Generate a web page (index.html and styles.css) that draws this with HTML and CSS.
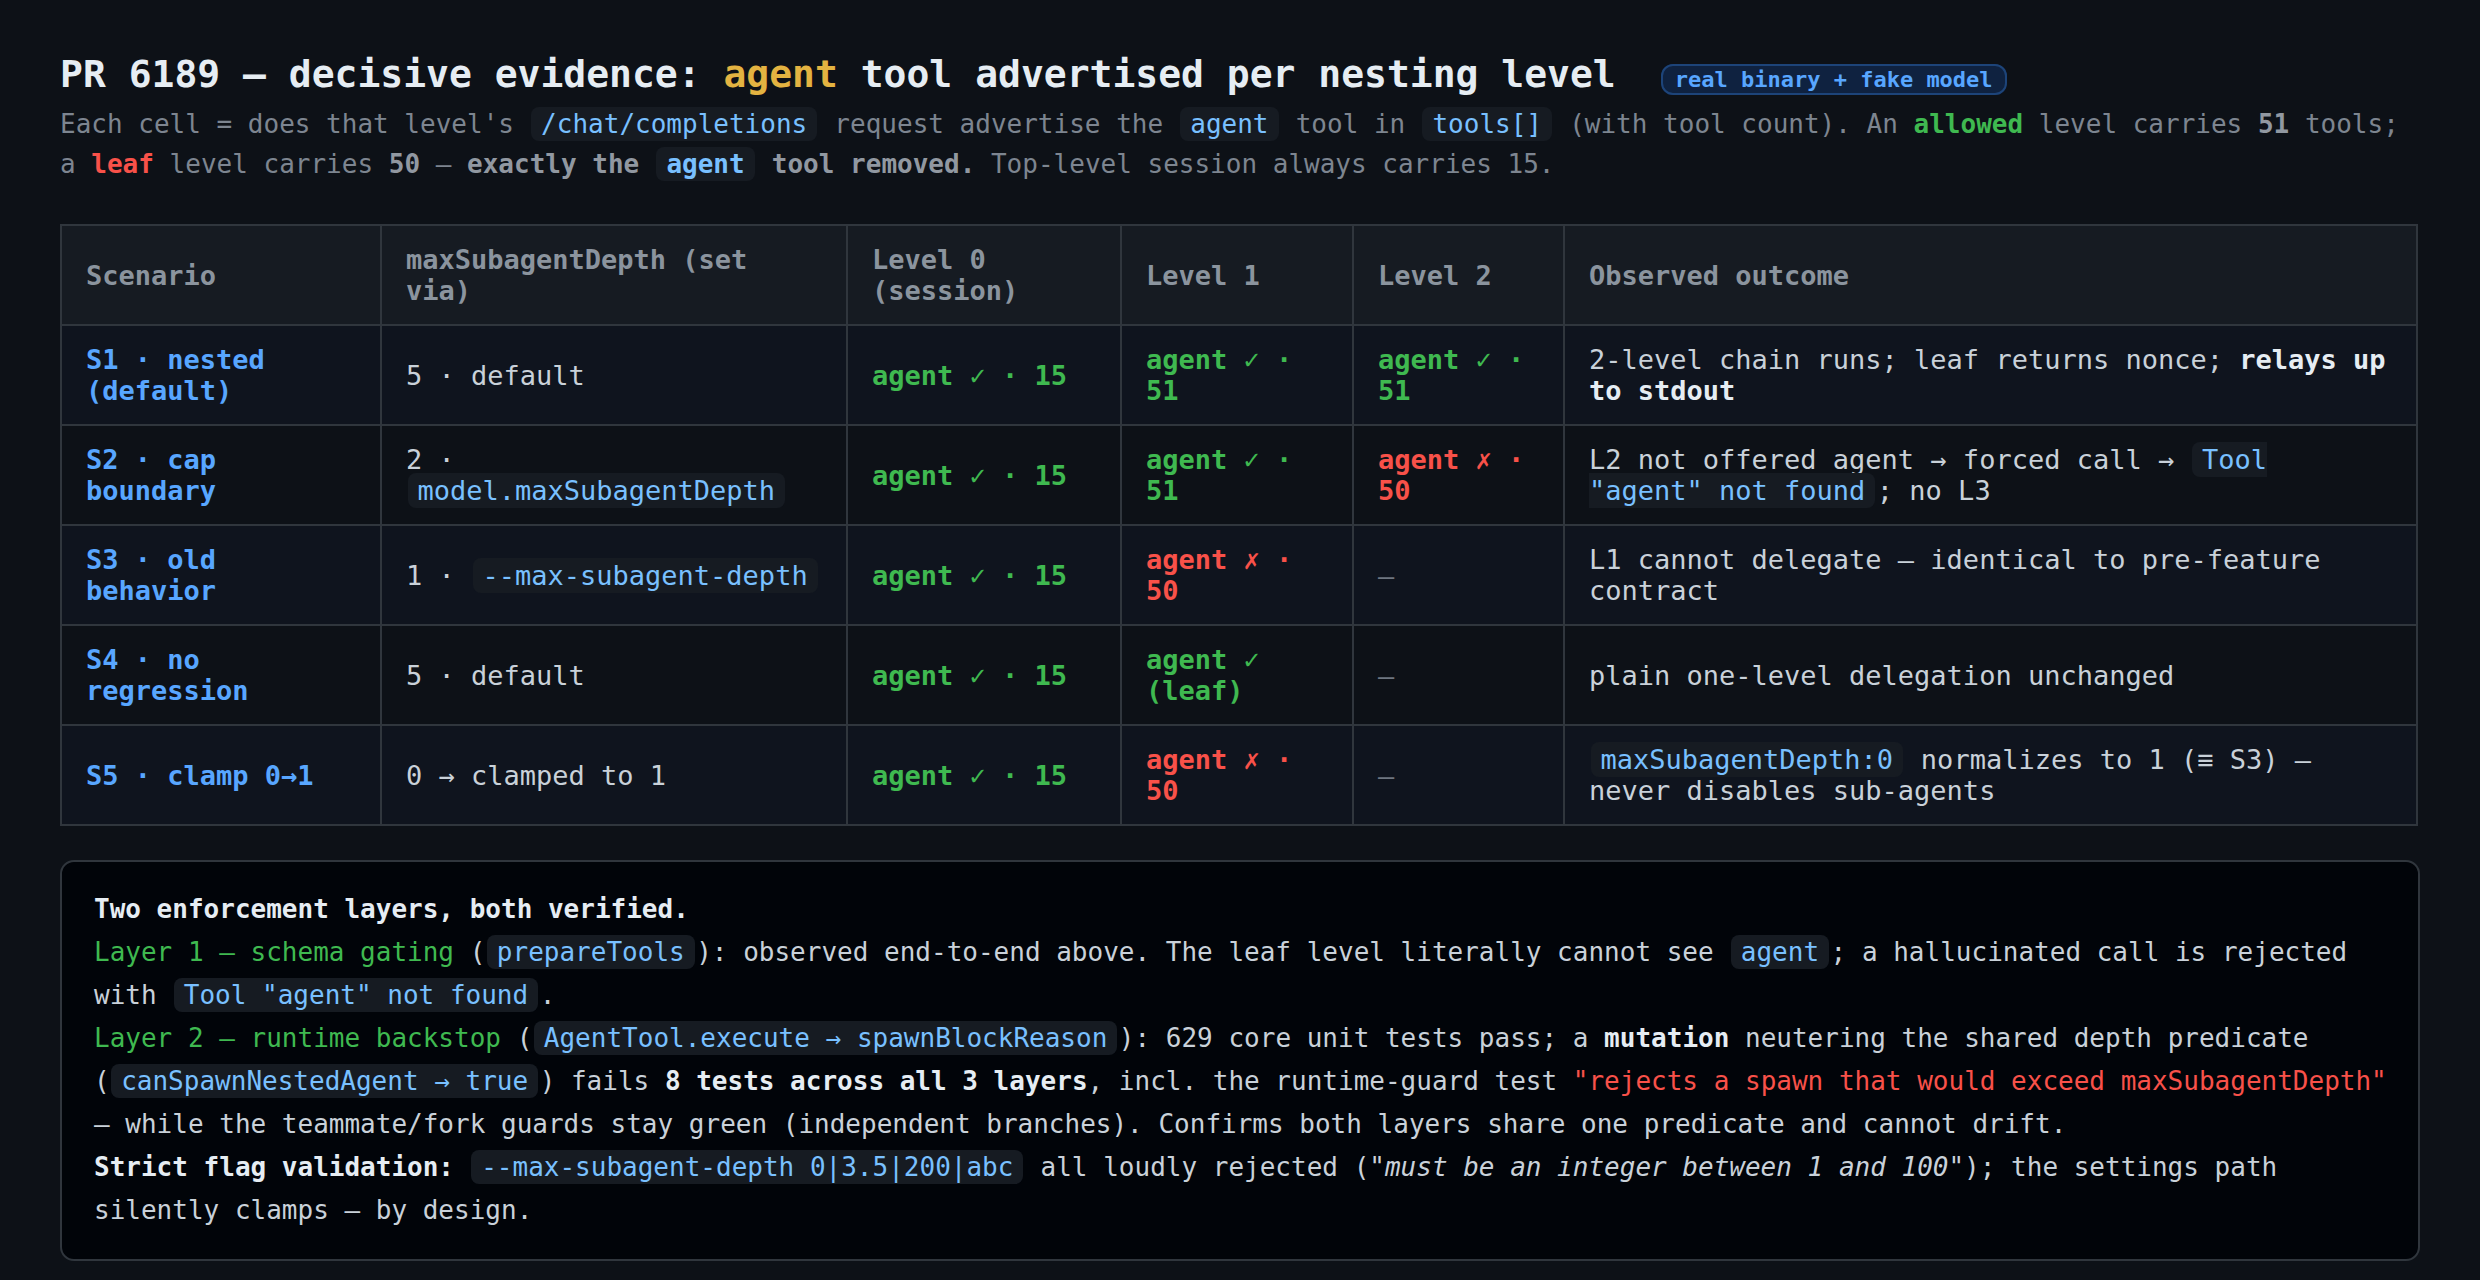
FILE: index.html
```html
<!DOCTYPE html>
<html lang="en">
<head>
<meta charset="utf-8">
<title>PR 6189 — decisive evidence</title>
<link rel="stylesheet" href="styles.css">
</head>
<body>
<main class="page">
  <h1 class="title">PR 6189 — decisive evidence: <span class="hl">agent</span> tool advertised per nesting level<span class="badge">real binary + fake model</span></h1>
  <p class="lede">Each cell = does that level's <code>/chat/completions</code> request advertise the <code>agent</code> tool in <code>tools[]</code> (with tool count). An <b class="ok">allowed</b> level carries <b>51</b> tools; a <b class="bad">leaf</b> level carries <b>50</b> — <b>exactly the <code>agent</code> tool removed.</b> Top-level session always carries 15.</p>

  <table class="grid">
    <thead>
      <tr>
        <th class="c1">Scenario</th>
        <th class="c2">maxSubagentDepth (set via)</th>
        <th class="c3">Level 0 (session)</th>
        <th class="c4">Level 1</th>
        <th class="c5">Level 2</th>
        <th>Observed outcome</th>
      </tr>
    </thead>
    <tbody>
      <tr>
        <td class="sc">S1 · nested (default)</td>
        <td>5 · default</td>
        <td class="pass">agent <span class="mk">✓</span> · 15</td>
        <td class="pass">agent <span class="mk">✓</span> · 51</td>
        <td class="pass">agent <span class="mk">✓</span> · 51</td>
        <td>2-level chain runs; leaf returns nonce; <b class="em">relays up to stdout</b></td>
      </tr>
      <tr>
        <td class="sc">S2 · cap boundary</td>
        <td>2 · <code>model.maxSubagentDepth</code></td>
        <td class="pass">agent <span class="mk">✓</span> · 15</td>
        <td class="pass">agent <span class="mk">✓</span> · 51</td>
        <td class="fail">agent <span class="mk">✗</span> · 50</td>
        <td>L2 not offered agent → forced call → <code>Tool "agent" not found</code>; no L3</td>
      </tr>
      <tr>
        <td class="sc">S3 · old behavior</td>
        <td>1 · <code>--max-subagent-depth</code></td>
        <td class="pass">agent <span class="mk">✓</span> · 15</td>
        <td class="fail">agent <span class="mk">✗</span> · 50</td>
        <td class="none">—</td>
        <td>L1 cannot delegate — identical to pre-feature contract</td>
      </tr>
      <tr>
        <td class="sc">S4 · no regression</td>
        <td>5 · default</td>
        <td class="pass">agent <span class="mk">✓</span> · 15</td>
        <td class="pass">agent <span class="mk">✓</span> (leaf)</td>
        <td class="none">—</td>
        <td>plain one-level delegation unchanged</td>
      </tr>
      <tr>
        <td class="sc">S5 · clamp 0→1</td>
        <td>0 → clamped to 1</td>
        <td class="pass">agent <span class="mk">✓</span> · 15</td>
        <td class="fail">agent <span class="mk">✗</span> · 50</td>
        <td class="none">—</td>
        <td><code>maxSubagentDepth:0</code> normalizes to 1 (≡ S3) — never disables sub-agents</td>
      </tr>
    </tbody>
  </table>

  <section class="note">
    <p class="head">Two enforcement layers, both verified.</p>
    <p><span class="layer">Layer 1 — schema gating</span> (<code>prepareTools</code>): observed end-to-end above. The leaf level literally cannot see <code>agent</code>; a hallucinated call is rejected with <code>Tool "agent" not found</code>.</p>
    <p><span class="layer">Layer 2 — runtime backstop</span> (<code>AgentTool.execute → spawnBlockReason</code>): 629 core unit tests pass; a <b>mutation</b> neutering the shared depth predicate (<code>canSpawnNestedAgent → true</code>) fails <b>8 tests across all 3 layers</b>, incl. the runtime-guard test <span class="quote">"rejects a spawn that would exceed maxSubagentDepth"</span> — while the teammate/fork guards stay green (independent branches). Confirms both layers share one predicate and cannot drift.</p>
    <p><b>Strict flag validation:</b> <code>--max-subagent-depth 0|3.5|200|abc</code> all loudly rejected ("<i>must be an integer between 1 and 100</i>"); the settings path silently clamps — by design.</p>
  </section>
</main>
</body>
</html>
```

FILE: styles.css
```css
html {
  background: #0d1117;
}

body {
  margin: 0;
  background: #0d1117;
  color: #c9d1d9;
  font-family: "DejaVu Sans Mono", "Liberation Mono", monospace;
}

.page {
  padding: 49px 60px 19px;
}

.title {
  margin: 0;
  font-size: 38px;
  line-height: 50px;
  font-weight: 700;
  color: #e6edf3;
}

.hl {
  color: #e3b341;
}

.badge {
  margin-left: 45px;
  padding: 1px 12px;
  border: 2px solid #1d4479;
  border-radius: 12px;
  background: #0f2240;
  color: #58a6ff;
  font-size: 22px;
  line-height: 26px;
  font-weight: 700;
}

.lede {
  margin: 5px 0 0;
  max-width: 2350px;
  font-size: 26px;
  line-height: 40px;
  color: #7d8590;
}

.lede b {
  color: #9198a1;
}

.lede b.ok {
  color: #3fb950;
}

.lede b.bad {
  color: #f85149;
}

code {
  font: inherit;
  color: #79c0ff;
  background: #161b22;
  border-radius: 8px;
  padding: 2px 10px;
  margin: 0 1.5px;
}

.grid {
  margin-top: 40px;
  width: 2358px;
  table-layout: fixed;
  border-collapse: collapse;
  font-size: 27px;
  line-height: 31px;
  border: 2px solid #30363d;
}

.grid th,
.grid td {
  box-sizing: border-box;
  border: 2px solid #30363d;
  padding: 18px 24px;
  text-align: left;
  vertical-align: middle;
}

.grid th {
  background: #161b22;
  color: #8b949e;
  font-weight: 700;
}

.grid .c1 { width: 320px; }
.grid .c2 { width: 466px; }
.grid .c3 { width: 274px; }
.grid .c4 { width: 232px; }
.grid .c5 { width: 211px; }

.grid tbody tr:nth-child(odd) td {
  background: #0f141e;
}

.grid tbody tr:nth-child(even) td {
  background: #0d1117;
}

.grid .sc {
  color: #58a6ff;
  font-weight: 700;
}

.grid .pass {
  color: #3fb950;
  font-weight: 700;
}

.grid .fail {
  color: #f85149;
  font-weight: 700;
}

.grid .none {
  color: #6e7681;
}

.mk {
  font-weight: 400;
}

.em {
  color: #e6edf3;
  font-weight: 700;
}

.note {
  margin-top: 34px;
  border: 2px solid #30363d;
  border-radius: 14px;
  background: #010409;
  padding: 26px 24px 27px 32px;
  font-size: 26px;
  line-height: 43px;
  color: #c9d1d9;
}

.note p {
  margin: 0;
}

.note .head {
  font-weight: 700;
  color: #e6edf3;
}

.note b {
  color: #e6edf3;
}

.note .layer {
  color: #3fb950;
}

.note .quote {
  color: #f85149;
}
```
